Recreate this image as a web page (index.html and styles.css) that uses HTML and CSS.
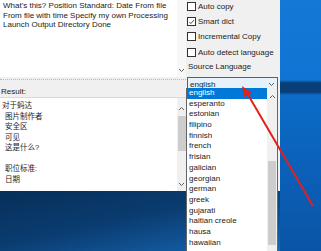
FILE: index.html
```html
<!DOCTYPE html>
<html>
    <head>
        <meta charset="utf-8">
        <link rel="stylesheet" href="styles.css">
    </head>
    <body>
        <div class='app'>
            <div class='left'>
                <div class='editor top-editor'>
                    <div class='editor-text'>What's this? Position Standard: Date From file<br>From file with time Specify my own Processing<br>Launch Output Directory Done</div>
                    <div class='vscroll vscroll-top'>
                        <span class='vs-grow'></span>
                        <svg class='chev' width='7' height='5' viewBox='0 0 7 5'><polyline points='1,1 3.5,3.5 6,1' /></svg>
                    </div>
                </div>
                <div class='result-label'>Result:</div>
                <div class='editor result-editor'>
                    <div class='editor-text cjk'>
                        <div class='first'>对于蚂达</div>
                        <div>图片制作者</div>
                        <div>安全区</div>
                        <div>可见</div>
                        <div>这是什么?</div>
                        <div>&nbsp;</div>
                        <div>职位标准:</div>
                        <div>日期</div>
                    </div>
                    <div class='vscroll vscroll-result'>
                        <svg class='chev' width='7' height='5' viewBox='0 0 7 5'><polyline points='1,4 3.5,1.5 6,4' /></svg>
                        <span class='thumb result-thumb'></span>
                        <span class='vs-grow'></span>
                        <svg class='chev' width='7' height='5' viewBox='0 0 7 5'><polyline points='1,1 3.5,3.5 6,1' /></svg>
                    </div>
                </div>
            </div>
            <div class='side'>
                <label class='check'><span class='box'></span>Auto copy</label>
                <label class='check'><span class='box'><svg width='8' height='8' viewBox='0 0 8 8'><polyline points='1.5,4 3.2,5.8 6.8,1.8' /></svg></span>Smart dict</label>
                <label class='check'><span class='box'></span>Incremental Copy</label>
                <label class='check'><span class='box'></span>Auto detect language</label>
                <div class='src-label'>Source Language</div>
                <div class='select'>
                    <span>english</span>
                    <svg class='chev' width='7' height='5' viewBox='0 0 7 5'><polyline points='1,1 3.5,3.5 6,1' /></svg>
                </div>
            </div>
        </div>

        <!-- open dropdown, hangs below the window -->
        <div class='droplist'>
            <div class='items'>
                <div class='item selected'>english</div>
                <div class='item'>esperanto</div>
                <div class='item'>estonian</div>
                <div class='item'>filipino</div>
                <div class='item'>finnish</div>
                <div class='item'>french</div>
                <div class='item'>frisian</div>
                <div class='item'>galician</div>
                <div class='item'>georgian</div>
                <div class='item'>german</div>
                <div class='item'>greek</div>
                <div class='item'>gujarati</div>
                <div class='item'>haitian creole</div>
                <div class='item'>hausa</div>
                <div class='item'>hawaiian</div>
            </div>
            <div class='vscroll vscroll-list'>
                <svg class='chev' width='7' height='5' viewBox='0 0 7 5'><polyline points='1,4 3.5,1.5 6,4' /></svg>
                <span class='thumb list-thumb'></span>
            </div>
        </div>

        <svg class='pointer' width='321' height='251' viewBox='0 0 321 251'>
            <line x1='313' y1='206' x2='247' y2='93' />
            <polygon points='242,86 252,93 244,97' />
        </svg>
    </body>
</html>
```

FILE: styles.css
```css
html {
    box-sizing: border-box;
}
*, *:before, *:after {
    box-sizing: inherit;
}

body {
    margin: 0;
    width: 321px;
    height: 251px;
    overflow: hidden;
    position: relative;
    font-family: "Liberation Sans", "Noto Sans CJK SC", sans-serif;
    font-size: 8px;
    color: #1b1b1b;
    background:
        linear-gradient(168deg, #072f59 0%, #0a3c70 45%, #12579c 80%, #1a6ab4 100%) 0 191px / 280px 60px no-repeat,
        linear-gradient(#1378d6 0, #0f74d3 80px, #0a3e76 83px, #0a3e76 92px, #0c6cc8 95px, #0b60b8 170px, #0a54a6 251px) 280px 0 / 41px 251px no-repeat;
}

.app {
    width: 280px;
    height: 191px;
    display: grid;
    grid-template-columns: 186px 94px;
    background-color: #f0f0f0;
}

.left {
    display: flex;
    flex-direction: column;
}

.editor {
    display: flex;
    background-color: white;
}

.editor-text {
    flex: 1;
    white-space: nowrap;
    overflow: hidden;
}

.top-editor {
    height: 77px;
}
.top-editor .editor-text {
    padding: 1px 0 0 3px;
    line-height: 9.7px;
}

.result-label {
    padding-top: 7px;
    padding-left: 1px;
    border-top: 1px dotted #b8b8b8;
    margin-top: 2px;
    height: 18px;
}

.result-editor {
    flex: 1;
    border-top: 1px solid #d9d9d9;
}
.result-editor .editor-text {
    padding: 3px 0 0 5px;
    font-size: 7.5px;
    line-height: 10.5px;
    color: #1b1b1b;
}
.result-editor .first {
    margin-left: -3px;
}

.vscroll {
    width: 9px;
    background-color: #f0f0f0;
    display: flex;
    flex-direction: column;
    align-items: center;
}
.vs-grow {
    flex: 1;
}
.chev {
    flex: none;
    margin: 3px 0;
}
.chev polyline {
    fill: none;
    stroke: #606060;
    stroke-width: 1;
}
.thumb {
    width: 8px;
    background-color: #cdcdcd;
}

.vscroll-top {
    background-color: #f7f7f7;
    padding-bottom: 1px;
}
.vscroll-result {
    padding: 5px 0 1px;
}
.result-thumb {
    height: 35px;
    margin-top: 2px;
}

.side {
    padding: 0 0 0 1px;
}

.check {
    display: flex;
    align-items: center;
    height: 14.3px;
    margin-top: -1px;
    margin-bottom: 1px;
    white-space: nowrap;
}
.check + .check {
    margin-top: 0;
}
.box {
    width: 9px;
    height: 9px;
    border: 1px solid #333;
    background-color: white;
    margin-right: 2px;
    display: flex;
}
.box polyline {
    fill: none;
    stroke: #333;
    stroke-width: 1;
}

.src-label {
    margin-top: 2px;
    padding-left: 1px;
    height: 16px;
    line-height: 12px;
}

.select {
    width: 91px;
    height: 15px;
    border: 1px solid #0078d7;
    background-color: #e5f1fb;
    display: flex;
    align-items: center;
    justify-content: space-between;
    padding: 0 2px 0 2px;
}

.droplist {
    position: absolute;
    left: 186px;
    top: 88px;
    width: 92px;
    height: 170px;
    background-color: white;
    border: 1px solid #646464;
    border-top: none;
    display: flex;
}
.items {
    flex: 1;
}
.item {
    height: 10.7px;
    line-height: 10.7px;
    padding-left: 2px;
    white-space: nowrap;
}
.item.selected {
    background-color: #0078d7;
    color: white;
}
.vscroll-list {
    width: 10px;
    padding-top: 3px;
}
.list-thumb {
    height: 84px;
    margin-top: 59px;
}

.pointer {
    position: absolute;
    left: 0;
    top: 0;
}
.pointer line {
    stroke: #e3201b;
    stroke-width: 2;
}
.pointer polygon {
    fill: #e3201b;
}
```
